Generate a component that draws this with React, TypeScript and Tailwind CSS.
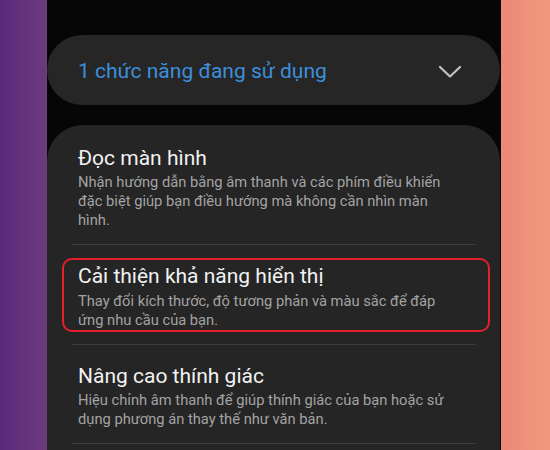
import { ReactNode } from 'react'

function Item({ title, desc, boxed }: { title: string; desc: ReactNode; boxed?: boolean }) {
  if (boxed) {
    return (
      <div className="mt-[13px] mb-[12px] ml-[15px] mr-[10px] border-2 border-[#e3202b] rounded-[10px] pl-[14px] pr-[40px] pt-[3px]">
        <p className="text-[21px] leading-[26px] text-[#f2f2f2]">{title}</p>
        <p className="mt-[3px] text-[14.7px] leading-[19px] text-[#a3a3a3]">{desc}</p>
      </div>
    )
  }
  return (
    <div className="pl-[31px] pr-[52px] pt-[18px] pb-[14px]">
      <p className="text-[21px] leading-[26px] text-[#f2f2f2]">{title}</p>
      <p className="mt-[2px] text-[14.7px] leading-[19px] text-[#a3a3a3]">{desc}</p>
    </div>
  )
}

function Divider() {
  return <div className="h-px ml-[25px] mr-[24px] bg-[#3c3c3c]" />
}

export default function App() {
  return (
    <div className="flex w-[550px] h-[450px] overflow-hidden font-['Roboto',sans-serif]">
      <div className="w-[47px] bg-gradient-to-r from-[#5a2a7b] to-[#6d3a7b]" />

      <div className="w-[454px] bg-[#060606] pt-[35px]">
        {/* dropdown */}
        <div className="h-[70px] mr-[1px] rounded-full bg-[#262626] flex items-center justify-between pl-[31px] pr-[38px] pt-[3px]">
          <span className="text-[21px] text-[#3d8fdb]">1 chức năng đang sử dụng</span>
          <svg width="24" height="14" viewBox="0 0 24 14" fill="none">
            <polyline points="2,2 12,11.5 22,2" stroke="#c2c2c2" strokeWidth="2.2" strokeLinecap="round" strokeLinejoin="round" />
          </svg>
        </div>

        {/* list */}
        <div className="mt-[20px] mr-[1px] rounded-t-[36px] bg-[#252525] pb-10">
          <div className="pt-[2px]">
            <Item
              title="Đọc màn hình"
              desc="Nhận hướng dẫn bằng âm thanh và các phím điều khiển đặc biệt giúp bạn điều hướng mà không cần nhìn màn hình."
            />
          </div>
          <Divider />
          <Item
            boxed
            title="Cải thiện khả năng hiển thị"
            desc="Thay đổi kích thước, độ tương phản và màu sắc để đáp ứng nhu cầu của bạn."
          />
          <Divider />
          <Item
            title="Nâng cao thính giác"
            desc="Hiệu chỉnh âm thanh để giúp thính giác của bạn hoặc sử dụng phương án thay thế như văn bản."
          />
          <Divider />
        </div>
      </div>

      <div className="flex-1 bg-gradient-to-r from-[#ec8977] to-[#f1977e]" />
    </div>
  )
}
